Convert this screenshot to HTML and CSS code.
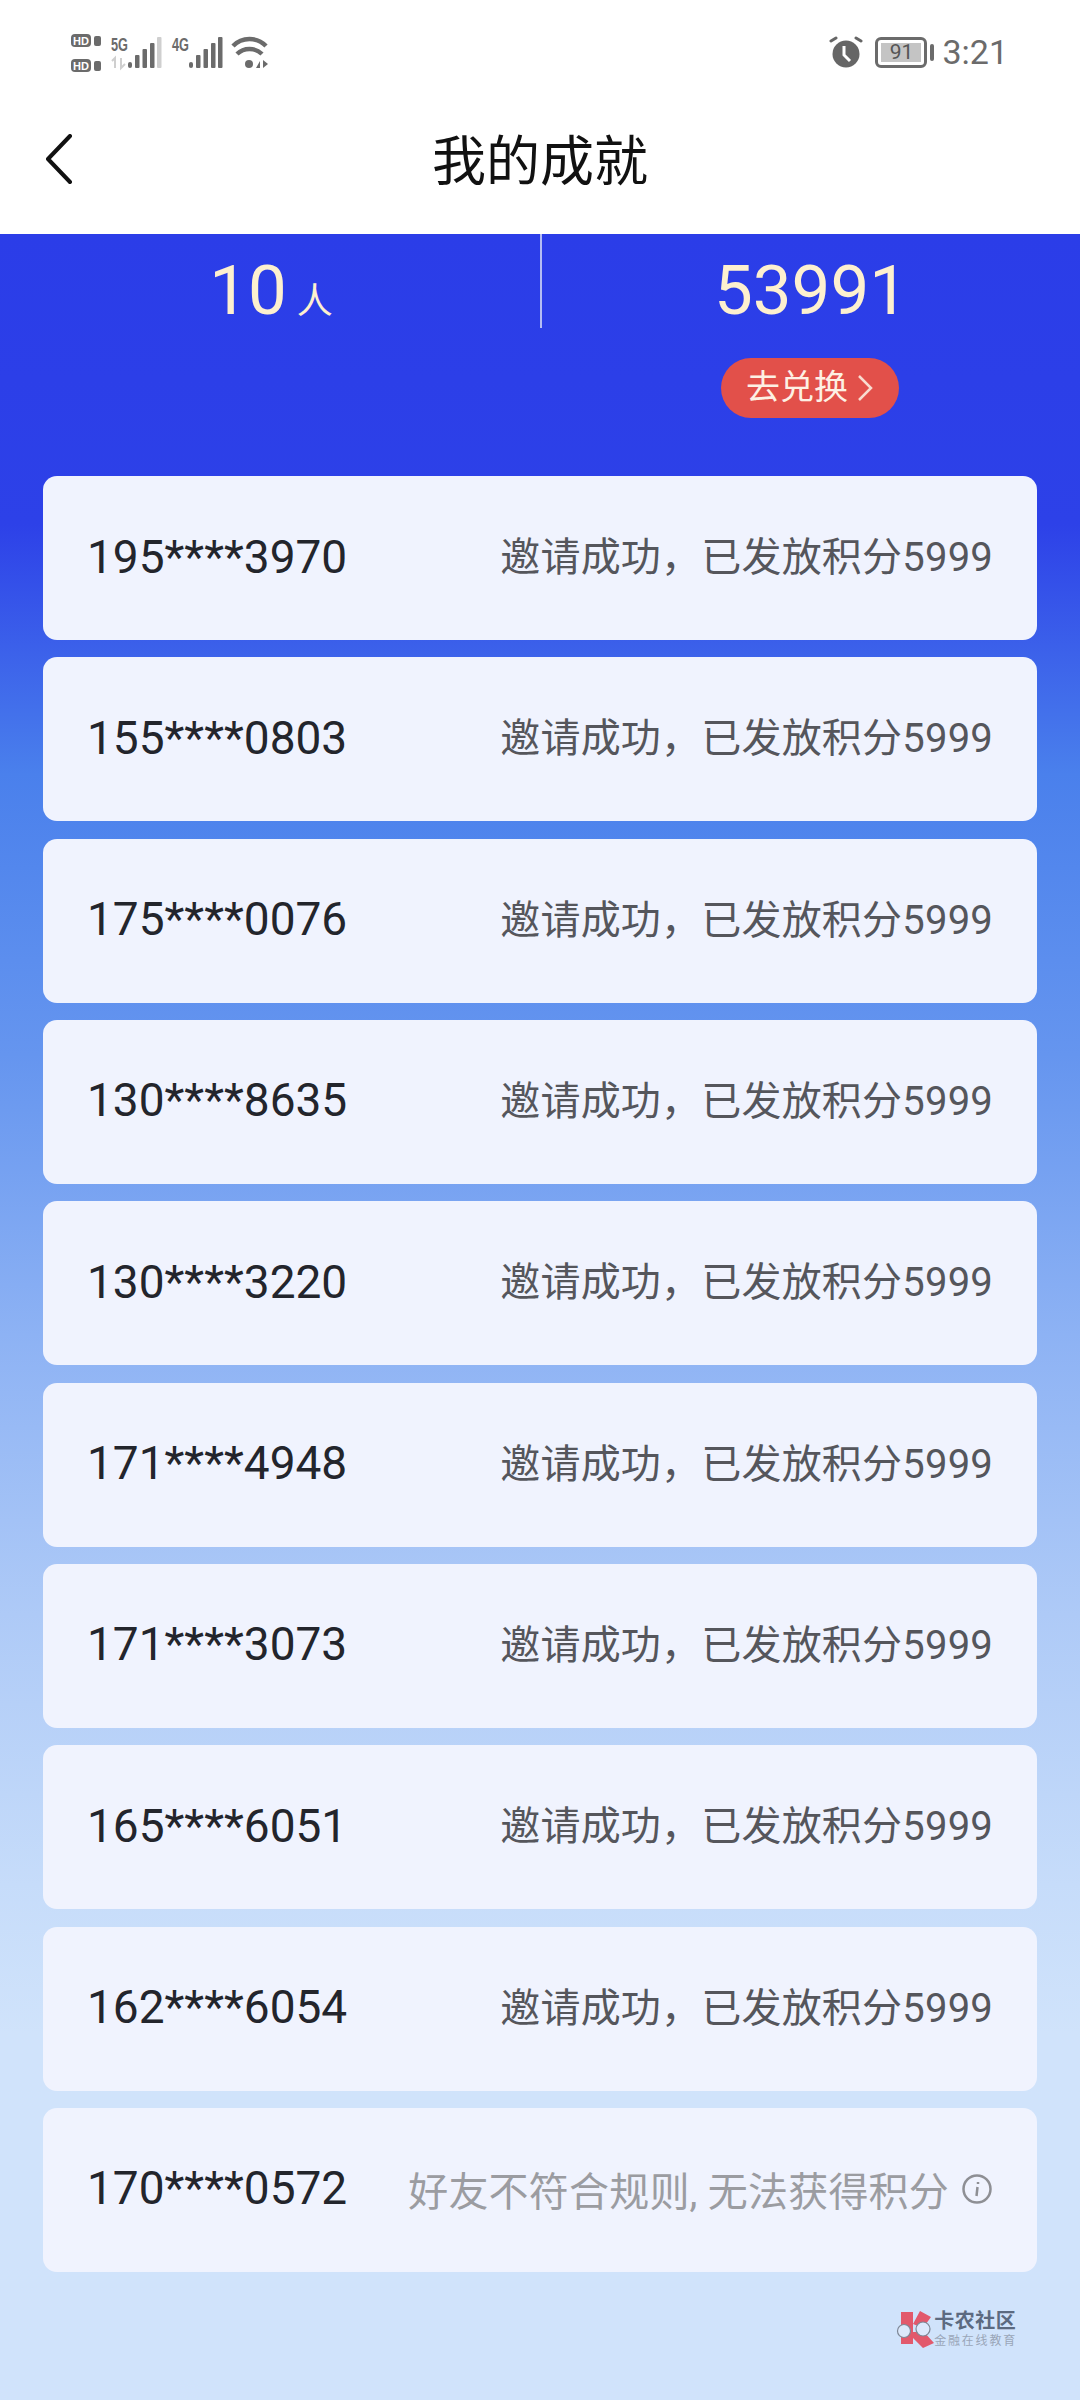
FILE: index.html
```html
<!DOCTYPE html>
<html>
<head>
    <meta charset="UTF-8">
    <title>我的成就</title>
    <link rel="stylesheet" href="styles.css">
</head>
<body>
    <div class="status-bar">
        <svg class="status-left" width="200" height="50" viewBox="70 30 200 50">
            <rect x="71" y="34" width="20" height="13" rx="4" fill="#6b6b6b"/>
            <text x="81" y="44.5" class="hd">HD</text>
            <rect x="94" y="36" width="7" height="10" rx="2" fill="#6b6b6b"/>
            <rect x="71" y="59" width="20" height="13" rx="4" fill="#6b6b6b"/>
            <text x="81" y="69.5" class="hd">HD</text>
            <rect x="94" y="61" width="7" height="10" rx="2" fill="#6b6b6b"/>
            <text x="111" y="51" class="net" textLength="17" lengthAdjust="spacingAndGlyphs">5G</text>
            <path d="M115 68V58l-3 3M121 58v10l4-4" fill="none" stroke="#cfcfcf" stroke-width="2"/>
            <g fill="#6b6b6b">
                <rect x="128" y="62" width="4" height="6" rx="2"/>
                <rect x="135" y="55" width="4.5" height="13" rx="1"/>
                <rect x="142.500" y="49" width="4.5" height="19" rx="1"/>
                <rect x="150" y="43" width="4.5" height="25" rx="1"/>
                <rect x="157" y="37" width="4.5" height="31" rx="1" fill="#cfcfcf"/>
            </g>
            <text x="172" y="51" class="net" textLength="17" lengthAdjust="spacingAndGlyphs">4G</text>
            <g fill="#6b6b6b">
                <rect x="189" y="62" width="4" height="6" rx="2"/>
                <rect x="196" y="55" width="4.5" height="13" rx="1"/>
                <rect x="203.500" y="49" width="4.5" height="19" rx="1"/>
                <rect x="211" y="43" width="4.5" height="25" rx="1"/>
                <rect x="218" y="37" width="4.5" height="31" rx="1"/>
            </g>
            <g fill="none" stroke="#6b6b6b" stroke-width="4.500">
                <path d="M233 46a23 23 0 0 1 33 0"/>
                <path d="M237 54a18 18 0 0 1 25 0"/>
            </g>
            <circle cx="249" cy="64" r="4" fill="#6b6b6b"/>
            <path d="M256 68l4-7v7zM263 60l5 4-5 4z" fill="#6b6b6b"/>
        </svg>
        <div class="status-right">
            <svg width="34" height="34" viewBox="0 0 34 34">
                <circle cx="17" cy="19" r="13.500" fill="#666"/>
                <path d="M15 11v9l6 6" fill="none" stroke="#fff" stroke-width="3"/>
                <path d="M2 6l5-3M32 6l-5-3" stroke="#666" stroke-width="3" stroke-linecap="round"/>
            </svg>
            <div class="battery">
                <div class="battery-body"><span class="battery-level">91</span></div>
                <div class="battery-cap"></div>
            </div>
            <span class="time">3:21</span>
        </div>
    </div>

    <div class="nav">
        <svg class="back" width="28" height="50" viewBox="0 0 28 50">
            <path d="M25 2L3 25l22 23" fill="none" stroke="#111" stroke-width="4" stroke-linecap="round" stroke-linejoin="round"/>
        </svg>
        <div class="nav-title">我的成就</div>
    </div>

    <div class="page">
        <div class="stats">
            <div class="stat-col"><span class="stat-num">10</span><span class="stat-unit">人</span></div>
            <div class="stat-col stat-col-right"><span class="stat-num">53991</span></div>
        </div>
        <div class="exchange-row">
            <div class="exchange-btn"><span class="exchange-label">去兑换</span>
                <svg width="18" height="30" viewBox="0 0 18 30"><path d="M3 3l12 12L3 27" fill="none" stroke="#f8dcd0" stroke-width="2.500"/></svg>
            </div>
        </div>

        <div class="list">
            <div class="row"><span class="phone">195****3970</span><span class="note">邀请成功，已发放积分5999</span></div>
            <div class="row"><span class="phone">155****0803</span><span class="note">邀请成功，已发放积分5999</span></div>
            <div class="row"><span class="phone">175****0076</span><span class="note">邀请成功，已发放积分5999</span></div>
            <div class="row"><span class="phone">130****8635</span><span class="note">邀请成功，已发放积分5999</span></div>
            <div class="row"><span class="phone">130****3220</span><span class="note">邀请成功，已发放积分5999</span></div>
            <div class="row"><span class="phone">171****4948</span><span class="note">邀请成功，已发放积分5999</span></div>
            <div class="row"><span class="phone">171****3073</span><span class="note">邀请成功，已发放积分5999</span></div>
            <div class="row"><span class="phone">165****6051</span><span class="note">邀请成功，已发放积分5999</span></div>
            <div class="row"><span class="phone">162****6054</span><span class="note">邀请成功，已发放积分5999</span></div>
            <div class="row">
                <span class="phone">170****0572</span>
                <span class="note note-failed">好友不符合规则, 无法获得积分
                    <svg width="32" height="32" viewBox="0 0 32 32">
                        <circle cx="16" cy="16" r="13.500" fill="none" stroke="#8e8f94" stroke-width="2.500"/>
                        <path d="M16.500 14l-1 9M17 9v2" fill="none" stroke="#8e8f94" stroke-width="2.500"/>
                    </svg>
                </span>
            </div>
        </div>

        <div class="watermark">
            <svg width="38" height="38" viewBox="0 0 38 38">
                <path d="M5 2h12v32H5zM17 14L24 1l11 6-8 11zM17 22h11l10 11-11 5-10-10z" fill="#e2596c"/>
                <circle cx="8" cy="21" r="6.500" fill="#dce8fb" stroke="#7d8796" stroke-width="1.200"/>
                <circle cx="27" cy="19" r="7" fill="#dce8fb" stroke="#7d8796" stroke-width="1.200"/>
            </svg>
            <div class="watermark-text">
                <div class="watermark-name">卡农社区</div>
                <div class="watermark-sub">金融在线教育</div>
            </div>
        </div>
    </div>
</body>
</html>
```

FILE: styles.css
```css
body {
    margin: 0;
    width: 1080px;
    height: 2400px;
    overflow: hidden;
    font-family: Roboto, "Noto Sans CJK SC", sans-serif;
    background: #fff;
}
.status-bar {
    height: 100px;
    display: flex;
    justify-content: space-between;
    align-items: flex-start;
    padding: 0 72px 0 70px;
    box-sizing: border-box;
}
.status-left {
    margin-top: 30px;
}
.hd {
    font-family: "Liberation Sans", sans-serif;
    font-size: 11px;
    font-weight: bold;
    fill: #fff;
    text-anchor: middle;
}
.net {
    font-family: "Liberation Sans", sans-serif;
    font-size: 19px;
    font-weight: bold;
    fill: #6b6b6b;
}
.status-right {
    display: flex;
    align-items: center;
    height: 34px;
    margin-top: 35px;
    color: #6b6b6b;
}
.battery {
    display: flex;
    align-items: center;
    margin-left: 12px;
}
.battery-body {
    width: 52px;
    height: 31px;
    border: 3px solid #6b6b6b;
    border-radius: 6px;
    box-sizing: border-box;
    padding: 3px;
}
.battery-level {
    display: block;
    height: 100%;
    background: #c4c4c4;
    color: #555;
    font-size: 21px;
    line-height: 19px;
    text-align: center;
}
.battery-cap {
    width: 4px;
    height: 17px;
    margin-left: 3px;
    background: #6b6b6b;
    border-radius: 2px;
}
.time {
    font-size: 34px;
    margin-left: 8px;
}
.nav {
    position: relative;
    height: 134px;
    display: flex;
    align-items: center;
    justify-content: center;
}
.back {
    position: absolute;
    left: 45px;
    top: 34px;
}
.nav-title {
    font-size: 54px;
    color: #111;
    margin-bottom: 20px;
}
.page {
    height: 2166px;
    overflow: hidden;
    background: linear-gradient(180deg, #2b3de8 0, #2d41e8 290px, #4a80ec 540px, #6595ef 820px, #8db2f4 1100px, #aecaf7 1380px, #c6dcfa 1650px, #d0e3fb 1800px, #d0e3fb 2166px);
}
.stats {
    display: flex;
    height: 94px;
    padding-left: 2px;
}
.stat-col {
    flex: 1;
    display: flex;
    align-items: baseline;
    justify-content: center;
    color: #fdf0cf;
    line-height: 72px;
    padding-top: 21px;
}
.stat-col-right {
    border-left: 2px solid #b4bcf4;
}
.stat-num {
    font-size: 69px;
}
.stat-unit {
    font-size: 36px;
    margin-left: 10px;
}
.exchange-row {
    display: flex;
    justify-content: flex-end;
    padding: 30px 181px 0 0;
}
.exchange-btn {
    width: 178px;
    height: 60px;
    border-radius: 30px;
    background: #e2504a;
    color: #fdf0e4;
    font-size: 34px;
    display: flex;
    align-items: center;
    justify-content: center;
    gap: 8px;
}
.exchange-label {
    margin-bottom: 8px;
}
.list {
    display: flex;
    flex-direction: column;
    gap: 17.330px;
    padding: 58px 43px 0;
}
.row {
    height: 164px;
    display: flex;
    align-items: center;
    justify-content: space-between;
    padding: 0 44px;
    background: #f0f3fe;
    border-radius: 14px;
}
.phone {
    font-size: 46px;
    color: #23252c;
    margin-bottom: 3px;
}
.note {
    font-size: 40px;
    letter-spacing: 0.2px;
    color: #55565c;
    margin-bottom: 8px;
}
.note-failed {
    color: #9b9ca1;
    display: flex;
    align-items: center;
    gap: 12px;
    margin-bottom: 2px;
}
.watermark {
    display: flex;
    justify-content: flex-end;
    align-items: center;
    gap: 0;
    padding: 38px 63px 0 0;
}
.watermark-name {
    font-size: 20px;
    font-weight: bold;
    color: #5c6a80;
    line-height: 23px;
    letter-spacing: 0.5px;
}
.watermark-sub {
    font-size: 12px;
    color: #9aa6b8;
    line-height: 16px;
    letter-spacing: 1.800px;
}
```
